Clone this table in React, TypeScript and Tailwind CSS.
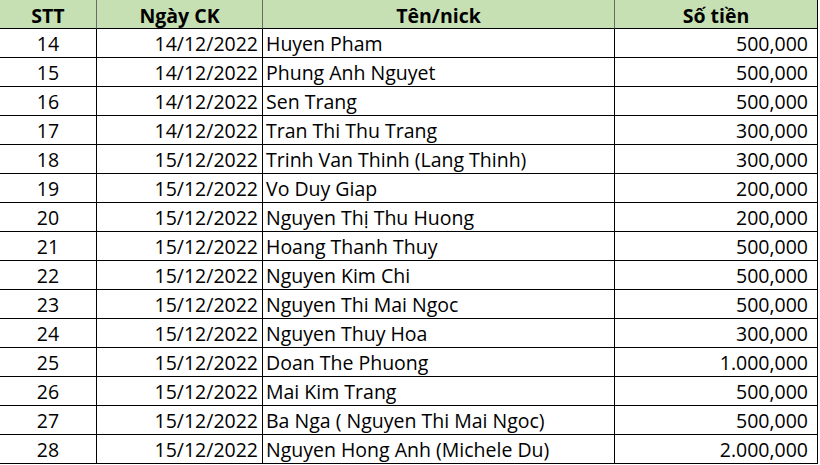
import React from 'react';

const rows: [string, string, string, string][] = [
  ['14', '14/12/2022', 'Huyen Pham', '500,000'],
  ['15', '14/12/2022', 'Phung Anh Nguyet', '500,000'],
  ['16', '14/12/2022', 'Sen Trang', '500,000'],
  ['17', '14/12/2022', 'Tran Thi Thu Trang', '300,000'],
  ['18', '15/12/2022', 'Trinh Van Thinh (Lang Thinh)', '300,000'],
  ['19', '15/12/2022', 'Vo Duy Giap', '200,000'],
  ['20', '15/12/2022', 'Nguyen Thị Thu Huong', '200,000'],
  ['21', '15/12/2022', 'Hoang Thanh Thuy', '500,000'],
  ['22', '15/12/2022', 'Nguyen Kim Chi', '500,000'],
  ['23', '15/12/2022', 'Nguyen Thi Mai Ngoc', '500,000'],
  ['24', '15/12/2022', 'Nguyen Thuy Hoa', '300,000'],
  ['25', '15/12/2022', 'Doan The Phuong', '1.000,000'],
  ['26', '15/12/2022', 'Mai Kim Trang', '500,000'],
  ['27', '15/12/2022', 'Ba Nga ( Nguyen Thi Mai Ngoc)', '500,000'],
  ['28', '15/12/2022', 'Nguyen Hong Anh (Michele Du)', '2.000,000'],
];

export default function App() {
  return (
    <div className="w-[820px] h-[465px] bg-white text-black overflow-hidden font-['Open_Sans',sans-serif] text-[19.5px] leading-none">
      <div className="grid grid-cols-[97px_166px_352px_203px]">
        {/* header */}
        <div className="h-[29px] bg-[#c6e0b4] border-r border-r-[#6b6b6b] border-b border-b-black flex items-center justify-center pt-[4px] font-bold">STT</div>
        <div className="h-[29px] bg-[#c6e0b4] border-r border-r-[#6b6b6b] border-b border-b-black flex items-center justify-center pt-[4px] font-bold">Ngày CK</div>
        <div className="h-[29px] bg-[#c6e0b4] border-r border-r-[#6b6b6b] border-b border-b-black flex items-center justify-center pt-[4px] font-bold">Tên/nick</div>
        <div className="h-[29px] bg-[#c6e0b4] border-r border-r-black border-b border-b-black flex items-center justify-center pt-[4px] font-bold">Số tiền</div>

        {rows.map(([stt, date, name, amount]) => (
          <React.Fragment key={stt}>
            <div className="h-[29px] border-r border-b border-black flex items-center justify-center pt-[2px]">{stt}</div>
            <div className="h-[29px] border-r border-b border-black flex items-center justify-end pr-[4px] pt-[2px]">{date}</div>
            <div className="h-[29px] border-r border-b border-black flex items-center pl-[3px] pt-[2px] whitespace-nowrap">{name}</div>
            <div className="h-[29px] border-r border-b border-black flex items-center justify-end pr-[9px] pt-[2px]">{amount}</div>
          </React.Fragment>
        ))}
      </div>
    </div>
  );
}
